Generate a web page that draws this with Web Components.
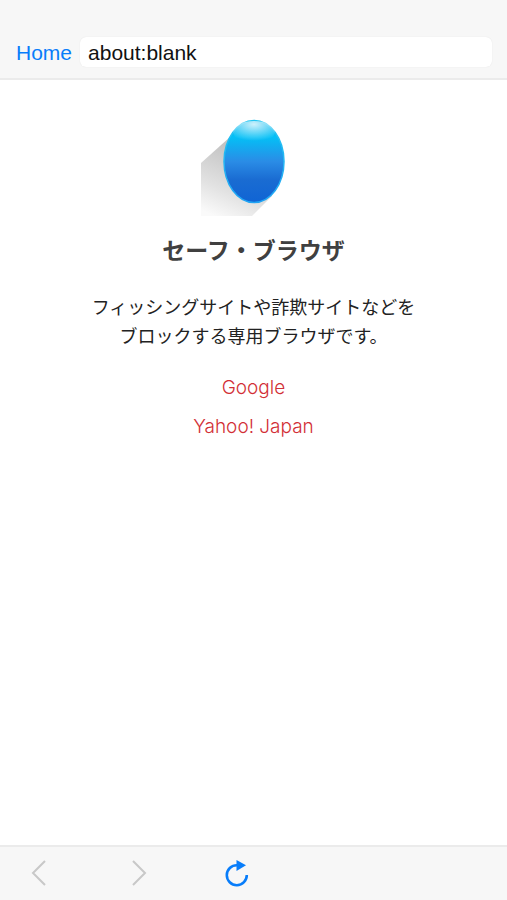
<!DOCTYPE html>
<html lang="ja">
<head>
<meta charset="utf-8">
<meta name="viewport" content="width=device-width, initial-scale=1">
<title>セーフ・ブラウザ</title>
<style>
html, body { margin: 0; min-height: 100%; background: #fff; }
body { font-family: "Liberation Sans", "Noto Sans CJK JP", sans-serif; }
</style>
</head>
<body>
<safe-browser>
  <address-bar slot="top" value="about:blank"></address-bar>
  <start-page>
    <balloon-logo slot="logo"></balloon-logo>
    <span slot="title">セーフ・ブラウザ</span>
    <span slot="text">フィッシングサイトや詐欺サイトなどを<br>ブロックする専用ブラウザです。</span>
    <site-link href="#google">Google</site-link>
    <site-link href="#yahoo">Yahoo! Japan</site-link>
  </start-page>
  <nav-bar slot="bottom"></nav-bar>
</safe-browser>
<script>
const define = (name, html, setup) => customElements.define(name, class extends HTMLElement {
  constructor() {
    super();
    this.attachShadow({ mode: "open" }).innerHTML = html;
  }
  connectedCallback() { if (setup) setup(this, this.shadowRoot); }
});

define("safe-browser", `
<style>
:host { display: flex; flex-direction: column; min-height: 100vh; }
main { flex: 1; }
</style>
<slot name="top"></slot><main><slot></slot></main><slot name="bottom"></slot>`);

define("address-bar", `
<style>
:host { display: block; background: #f7f7f7; border-bottom: 2px solid #ebebeb; }
header { display: flex; align-items: center; gap: 8px; padding: 37px 15px 11px 16px; }
button { border: 0; padding: 2px 0 0; background: none; color: #087dfa; font: 21px/28px "Liberation Sans", sans-serif; }
input { flex: 1; min-width: 0; box-sizing: border-box; height: 30px; border: 0; border-radius: 6px; padding: 2px 8px 0;
  background: #fff; color: #111; font: 21px/28px "Liberation Sans", sans-serif; outline: 0; box-shadow: 0 0 1px #ddd; }
</style>
<header><button type="button">Home</button><input type="text" aria-label="URL"></header>`,
(el, root) => { root.querySelector("input").value = el.getAttribute("value"); });

define("balloon-logo", `
<style>
:host { display: block; }
svg { display: block; margin: 0 auto; }
</style>
<svg width="107" height="108" viewBox="200 110 107 108" aria-hidden="true">
  <defs>
    <linearGradient id="body" x1="0" y1="0" x2="0" y2="1">
      <stop offset="0" stop-color="#08b8ee"/><stop offset=".2" stop-color="#04c0f6"/>
      <stop offset=".5" stop-color="#2a8ce6"/><stop offset=".72" stop-color="#1a6cd2"/><stop offset="1" stop-color="#1064d4"/>
    </linearGradient>
    <linearGradient id="rim" x1="0" y1="0" x2="0" y2="1">
      <stop offset="0" stop-color="#24c6f2"/><stop offset="1" stop-color="#20a4f4"/>
    </linearGradient>
    <radialGradient id="shine" cx=".5" cy=".15" r=".75">
      <stop offset="0" stop-color="#fff" stop-opacity=".8"/><stop offset=".5" stop-color="#fff" stop-opacity=".4"/><stop offset="1" stop-color="#fff" stop-opacity="0"/>
    </radialGradient>
    <linearGradient id="shade" gradientUnits="userSpaceOnUse" x1="238" y1="152" x2="210" y2="214">
      <stop offset="0" stop-color="#c4c4c4"/><stop offset=".6" stop-color="#e2e2e2"/><stop offset="1" stop-color="#fafafa"/>
    </linearGradient>
  </defs>
  <path d="M230 137L201 163V216H252L272 196Z" fill="url(#shade)"/>
  <ellipse cx="254" cy="161.500" rx="30" ry="41" fill="url(#body)" stroke="url(#rim)" stroke-width="1.500"/>
  <ellipse cx="254" cy="132" rx="21" ry="11" fill="url(#shine)"/>
</svg>`);

define("start-page", `
<style>
:host { display: block; padding: 30px 16px; text-align: center; }
h1 { margin: 15px 0 0; font: 700 23px/32px "Noto Sans CJK JP", sans-serif; color: #404040; }
p { margin: 27px 0 0; font: 18px/29px "Noto Sans CJK JP", sans-serif; color: #222; }
nav { display: grid; gap: 9px; margin-top: 23px; }
</style>
<slot name="logo"></slot>
<h1><slot name="title"></slot></h1>
<p><slot name="text"></slot></p>
<nav><slot></slot></nav>`);

define("site-link", `
<style>
:host { display: block; font: 300 19px/30px Inter, "Liberation Sans", sans-serif; }
a { color: #d22f36; text-decoration: none; }
</style>
<a><slot></slot></a>`,
(el, root) => { root.querySelector("a").href = el.getAttribute("href"); });

define("nav-bar", `
<style>
:host { display: block; background: #f7f7f7; border-top: 2px solid #ebebeb; }
nav { display: flex; gap: 53px; padding: 3px 16px 5px; }
button { border: 0; padding: 0; width: 46px; height: 45px; background: none; color: #087dfa; }
button:disabled { color: #c8c8c8; }
svg { display: block; margin: auto; fill: none; stroke: currentColor; }
</style>
<nav>
<button type="button" disabled aria-label="戻る"><svg width="30" height="30" viewBox="0 0 30 30" stroke-width="2"><path d="M21 3L9 15L21 27"/></svg></button>
<button type="button" disabled aria-label="進む"><svg width="30" height="30" viewBox="0 0 30 30" stroke-width="2"><path d="M10 3L22 15L10 27"/></svg></button>
<button type="button" aria-label="再読み込み"><svg width="30" height="30" viewBox="0 0 30 30" stroke-width="2.600"><path d="M15 7.200A10 10 0 1 0 24.800 17"/><path d="M14.500 2L24 7.300L14.500 13Z" fill="currentColor" stroke="none"/></svg></button>
</nav>`);
</script>
</body>
</html>
